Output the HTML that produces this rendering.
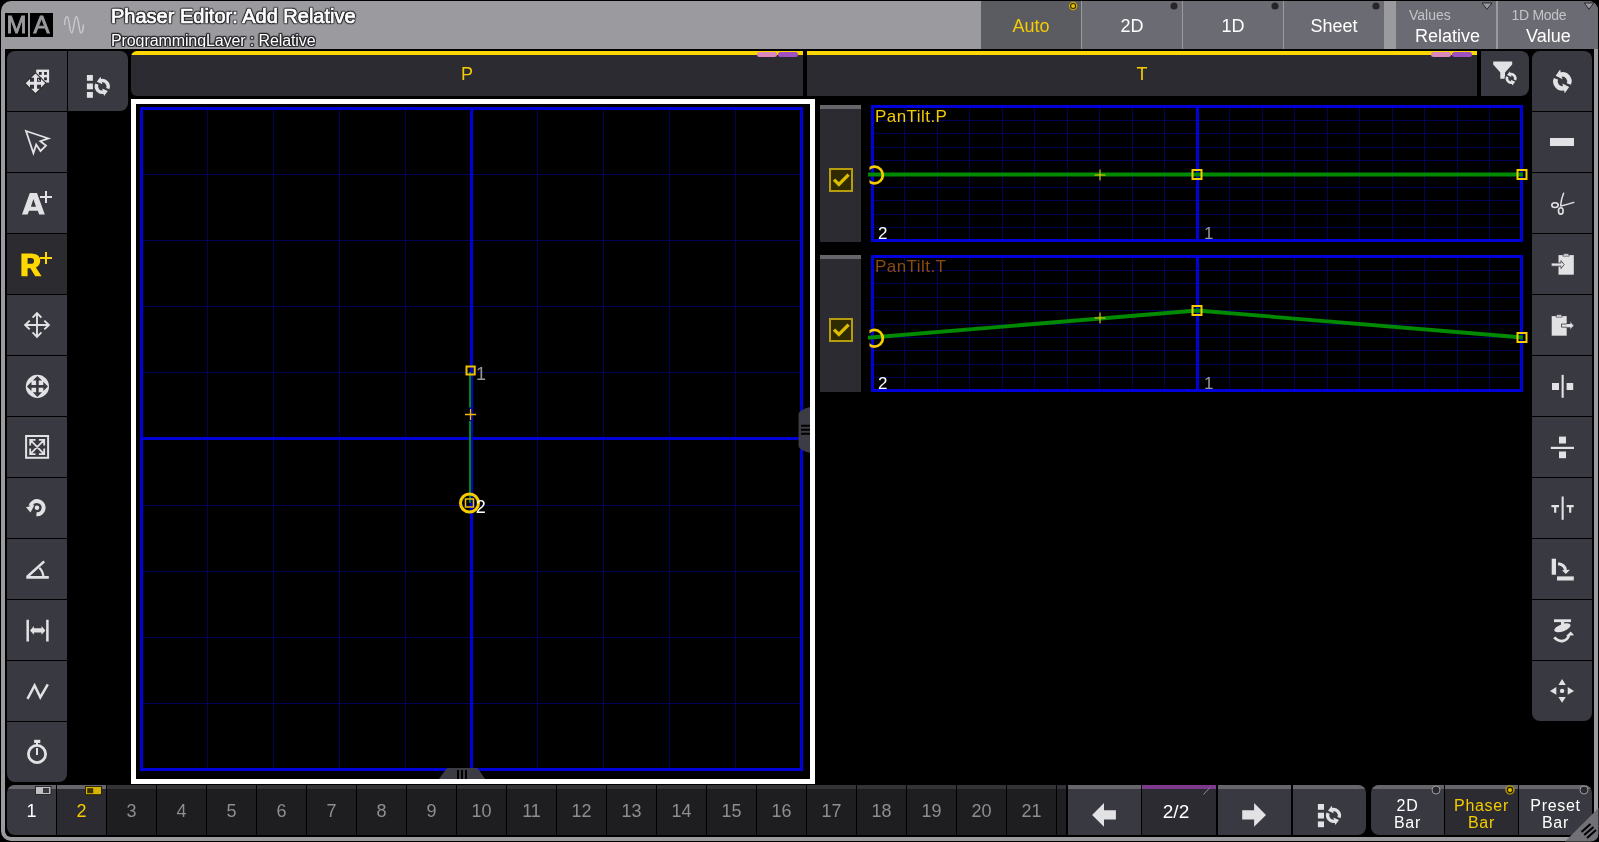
<!DOCTYPE html>
<html><head><meta charset="utf-8">
<style>
*{margin:0;padding:0;box-sizing:border-box}
html,body{width:1599px;height:842px;overflow:hidden;background:#000;font-family:"Liberation Sans",sans-serif}
.a{position:absolute}
.tb{top:1px;height:48px;background:#6b6b73;color:#fff;font-size:18px;text-align:center;line-height:50px}
.dot{position:absolute;width:9px;height:9px;border-radius:50%;background:#26262a;top:5px;right:4px}
.btn{position:absolute;background:#393941}
.hdr{top:51px;height:45px;background:#2c2b31;border-radius:6px;overflow:hidden;color:#f5cc00;font-size:18px;text-align:center;line-height:47px}
.hdr .ys{position:absolute;left:0;top:0;right:0;height:4px;background:#ffd700}
.bb{overflow:hidden;top:785px;height:50px;width:49px;background:#1f1f22;color:#8e8e92;font-size:18px;text-align:center;line-height:52px}
.bb .st{position:absolute;left:0;top:0;right:0;height:4px;background:#333337}
svg{position:absolute;overflow:visible}
.ic{position:absolute;left:0;top:0}
</style></head><body><div id="wrap" style="position:absolute;left:0;top:0;width:1599px;height:842px;will-change:transform">

<div class="a" style="left:1px;top:1px;width:1597px;height:840px;background:#9a9a9f;border-radius:10px"></div>
<div class="a" style="left:5px;top:49px;width:1589px;height:788px;background:#000;border-radius:0 0 6px 6px"></div>
<div class="a" style="left:5px;top:13px;width:23px;height:24px;background:#000"></div>
<div class="a" style="left:30px;top:13px;width:23px;height:24px;background:#000"></div>
<svg style="left:0;top:0" width="120" height="48"><text x="16.5" y="33.2" text-anchor="middle" font-family="Liberation Sans" font-size="24" fill="#9a9a9f" stroke="#9a9a9f" stroke-width="0.9">M</text><text x="41.5" y="33.2" text-anchor="middle" font-family="Liberation Sans" font-size="24" fill="#9a9a9f" stroke="#9a9a9f" stroke-width="0.9">A</text><path d="M64.6 25 C64.8 19 65.5 16.8 67.1 16.8 C69.5 16.8 69.5 32.9 71.6 32.9 C73.8 32.9 74 16.8 76.4 16.8 C78.8 16.8 79 32.9 80.9 32.9 C82.5 32.9 83.4 28 83.4 24.6" fill="none" stroke="#c8c8cc" stroke-width="1.5"/></svg>
<div class="a" style="left:111px;top:5px;color:#fff;font-size:20px;-webkit-text-stroke:0.7px #fff;letter-spacing:0px;white-space:nowrap;text-shadow:0 0 1px #2a2a2e,0 0 1.5px #2a2a2e,1px 0 1px #2a2a2e,-1px 0 1px #2a2a2e,0 1px 1px #2a2a2e,0 -1px 1px #2a2a2e,1px 1px 1px #2a2a2e,-1px -1px 1px #2a2a2e,1px -1px 1px #2a2a2e,-1px 1px 1px #2a2a2e">Phaser Editor: Add Relative</div>
<div class="a" style="left:111px;top:32px;height:14.5px;overflow:hidden;color:#fff;font-size:16px;letter-spacing:-0.1px;white-space:nowrap;text-shadow:0 0 1px #2a2a2e,0 0 1.5px #2a2a2e,1px 0 1px #2a2a2e,-1px 0 1px #2a2a2e,0 1px 1px #2a2a2e,0 -1px 1px #2a2a2e,1px 1px 1px #2a2a2e,-1px -1px 1px #2a2a2e,1px -1px 1px #2a2a2e,-1px 1px 1px #2a2a2e">ProgrammingLayer : Relative</div>
<div class="a tb" style="left:981px;width:100px;background:#5b5b62;color:#f5cc00">Auto</div>
<div class="a tb" style="left:1082px;width:100px">2D</div>
<div class="a tb" style="left:1183px;width:100px">1D</div>
<div class="a tb" style="left:1284px;width:100px">Sheet</div>
<div class="a tb" style="left:1396px;width:100px;line-height:normal"><div class="a" style="left:13px;top:6px;font-size:14px;color:#c4c4c8">Values</div><div class="a" style="left:19px;top:25px;font-size:18px">Relative</div></div>
<div class="a tb" style="left:1498px;width:100px;border-top-right-radius:9px;line-height:normal"><div class="a" style="left:13.5px;top:6px;font-size:14px;letter-spacing:-0.3px;color:#c4c4c8">1D Mode</div><div class="a" style="left:28px;top:25px;font-size:18px">Value</div></div>
<svg style="left:0;top:0" width="1599" height="20"><circle cx="1073.1" cy="6" r="3.6" fill="#2a2400" stroke="#c8a800" stroke-width="1.2"/><circle cx="1073.1" cy="6" r="2" fill="#e6c000"/></svg>
<svg style="left:0;top:0" width="1599" height="20"><circle cx="1174" cy="6" r="3.6" fill="#26262a"/></svg>
<svg style="left:0;top:0" width="1599" height="20"><circle cx="1275" cy="6" r="3.6" fill="#26262a"/></svg>
<svg style="left:0;top:0" width="1599" height="20"><circle cx="1376" cy="6" r="3.6" fill="#26262a"/></svg>
<svg style="left:0;top:0" width="1599" height="20"><path d="M1482 3 H1492 L1487 9.3 Z M1584.3 3 H1593.6 L1589 9.3 Z" fill="#9a9a9f" stroke="#2a2a2e" stroke-width="1"/></svg>
<div class="btn" style="left:7px;top:51.0px;width:60px;height:60px;background:#393941;border-top-left-radius:8px;"></div>
<div class="btn" style="left:7px;top:112.0px;width:60px;height:60px;background:#393941;"></div>
<div class="btn" style="left:7px;top:173.0px;width:60px;height:60px;background:#393941;"></div>
<div class="btn" style="left:7px;top:234.0px;width:60px;height:60px;background:#2b2b30;"></div>
<div class="btn" style="left:7px;top:295.0px;width:60px;height:60px;background:#393941;"></div>
<div class="btn" style="left:7px;top:356.0px;width:60px;height:60px;background:#393941;"></div>
<div class="btn" style="left:7px;top:417.0px;width:60px;height:60px;background:#393941;"></div>
<div class="btn" style="left:7px;top:478.0px;width:60px;height:60px;background:#393941;"></div>
<div class="btn" style="left:7px;top:539.0px;width:60px;height:60px;background:#393941;"></div>
<div class="btn" style="left:7px;top:600.0px;width:60px;height:60px;background:#393941;"></div>
<div class="btn" style="left:7px;top:661.0px;width:60px;height:60px;background:#393941;"></div>
<div class="btn" style="left:7px;top:722.0px;width:60px;height:60px;background:#393941;border-bottom-left-radius:8px;border-bottom-right-radius:8px;"></div>
<div class="btn" style="left:68px;top:51px;width:60px;height:60px;border-top-right-radius:8px;border-bottom-right-radius:8px"></div>
<div class="btn" style="left:1532px;top:51.0px;width:60px;height:60px;border-top-left-radius:8px;border-top-right-radius:8px;"></div>
<div class="btn" style="left:1532px;top:112.0px;width:60px;height:60px;"></div>
<div class="btn" style="left:1532px;top:173.0px;width:60px;height:60px;"></div>
<div class="btn" style="left:1532px;top:234.0px;width:60px;height:60px;"></div>
<div class="btn" style="left:1532px;top:295.0px;width:60px;height:60px;"></div>
<div class="btn" style="left:1532px;top:356.0px;width:60px;height:60px;"></div>
<div class="btn" style="left:1532px;top:417.0px;width:60px;height:60px;"></div>
<div class="btn" style="left:1532px;top:478.0px;width:60px;height:60px;"></div>
<div class="btn" style="left:1532px;top:539.0px;width:60px;height:60px;"></div>
<div class="btn" style="left:1532px;top:600.0px;width:60px;height:60px;"></div>
<div class="btn" style="left:1532px;top:661.0px;width:60px;height:60px;border-bottom-left-radius:8px;border-bottom-right-radius:8px;"></div>
<div class="btn" style="left:1481px;top:51px;width:48px;height:45px;border-top-right-radius:8px;border-bottom-right-radius:8px"></div>
<div class="a hdr" style="left:131px;width:672px;border-radius:6px 0 0 6px"><div class="ys"></div>P<div class="a" style="left:626px;top:1px;width:20px;height:5px;border-radius:3px;background:#dd88bb"></div><div class="a" style="left:647px;top:1px;width:20px;height:5px;border-radius:3px;background:#a050c0"></div></div>
<div class="a hdr" style="left:807px;width:670px;border-radius:0"><div class="ys"></div>T<div class="a" style="left:624px;top:1px;width:20px;height:5px;border-radius:3px;background:#dd88bb"></div><div class="a" style="left:645px;top:1px;width:20px;height:5px;border-radius:3px;background:#a050c0"></div></div>
<div class="a" style="left:131px;top:99px;width:684px;height:685px;border:5px solid #fff"></div>
<svg style="left:0;top:0" width="1599" height="842">
<path d="M207.5 107 V771 M273.5 107 V771 M339.5 107 V771 M405.5 107 V771 M537.5 107 V771 M603.5 107 V771 M669.5 107 V771 M735.5 107 V771 M140 174.5 H803 M140 240.5 H803 M140 306.5 H803 M140 372.5 H803 M140 505.5 H803 M140 571.5 H803 M140 637.5 H803 M140 703.5 H803" stroke="#020258" stroke-width="1" shape-rendering="crispEdges"/>
<path d="M471.5 107 V771 M140 438.5 H803" stroke="#0000d8" stroke-width="3" shape-rendering="crispEdges"/>
<rect x="141.5" y="108.5" width="660" height="661" fill="none" stroke="#0000d8" stroke-width="3" shape-rendering="crispEdges"/>
<path d="M470 372 V407.5 M470 421 V503" stroke="#008a00" stroke-width="2"/>
<rect x="466.5" y="366.5" width="8.2" height="8" fill="none" stroke="#f0c000" stroke-width="2"/>
<path d="M465 414.5 H476 M470.5 409 V420" stroke="#f0c000" stroke-width="1.3"/>
<circle cx="469.5" cy="503" r="9" fill="none" stroke="#f5cc00" stroke-width="3"/>
<rect x="465.5" y="499" width="8" height="8" fill="none" stroke="#f0c000" stroke-width="1.5"/>
<text x="476" y="380.4" font-size="18" fill="#999" font-family="Liberation Sans">1</text>
<text x="475.8" y="512.9" font-size="18" fill="#fff" font-family="Liberation Sans">2</text>
<path d="M904.5 105 V242 M937.5 105 V242 M969.5 105 V242 M1002.5 105 V242 M1034.5 105 V242 M1067.5 105 V242 M1099.5 105 V242 M1132.5 105 V242 M1164.5 105 V242 M1229.5 105 V242 M1262.5 105 V242 M1294.5 105 V242 M1327.5 105 V242 M1359.5 105 V242 M1392.5 105 V242 M1424.5 105 V242 M1457.5 105 V242 M1489.5 105 V242 M871 120.5 H1523 M871 133.5 H1523 M871 147.5 H1523 M871 160.5 H1523 M871 174.5 H1523 M871 187.5 H1523 M871 200.5 H1523 M871 214.5 H1523 M871 227.5 H1523" stroke="#020258" stroke-width="1" shape-rendering="crispEdges"/>
<path d="M1197.5 105 V242" stroke="#0000d8" stroke-width="3" shape-rendering="crispEdges"/>
<rect x="872.5" y="106.5" width="649" height="134" fill="none" stroke="#0000d8" stroke-width="3" shape-rendering="crispEdges"/>
<path d="M868 174.5 L1197 174.5 L1523 174.5" fill="none" stroke="#008a00" stroke-width="3.8"/>
<clipPath id="cl0"><rect x="869.5" y="105" width="40" height="137"/></clipPath>
<circle cx="874.5" cy="175.0" r="8.3" fill="none" stroke="#f5cc00" stroke-width="2.8" clip-path="url(#cl0)"/>
<rect x="1192.5" y="170.0" width="9" height="9" fill="none" stroke="#f5cc00" stroke-width="2"/>
<rect x="1517.5" y="170.0" width="9" height="9" fill="none" stroke="#f5cc00" stroke-width="2"/>
<path d="M1094.5 175 H1105.5 M1100 169.5 V180.5" stroke="#f5cc00" stroke-width="1.1"/>
<path d="M904.5 255 V392 M937.5 255 V392 M969.5 255 V392 M1002.5 255 V392 M1034.5 255 V392 M1067.5 255 V392 M1099.5 255 V392 M1132.5 255 V392 M1164.5 255 V392 M1229.5 255 V392 M1262.5 255 V392 M1294.5 255 V392 M1327.5 255 V392 M1359.5 255 V392 M1392.5 255 V392 M1424.5 255 V392 M1457.5 255 V392 M1489.5 255 V392 M871 270.5 H1523 M871 283.5 H1523 M871 297.5 H1523 M871 310.5 H1523 M871 324.5 H1523 M871 337.5 H1523 M871 350.5 H1523 M871 364.5 H1523 M871 377.5 H1523" stroke="#020258" stroke-width="1" shape-rendering="crispEdges"/>
<path d="M1197.5 255 V392" stroke="#0000d8" stroke-width="3" shape-rendering="crispEdges"/>
<rect x="872.5" y="256.5" width="649" height="134" fill="none" stroke="#0000d8" stroke-width="3" shape-rendering="crispEdges"/>
<path d="M868 337.7484662576687 L1197 310.5 L1523 337.5" fill="none" stroke="#008a00" stroke-width="3.8"/>
<clipPath id="cl150"><rect x="869.5" y="255" width="40" height="137"/></clipPath>
<circle cx="874.5" cy="338.2484662576687" r="8.3" fill="none" stroke="#f5cc00" stroke-width="2.8" clip-path="url(#cl150)"/>
<rect x="1192.5" y="306.0" width="9" height="9" fill="none" stroke="#f5cc00" stroke-width="2"/>
<rect x="1517.5" y="333.0" width="9" height="9" fill="none" stroke="#f5cc00" stroke-width="2"/>
<path d="M1094.5 318 H1105.5 M1100 312.5 V323.5" stroke="#f5cc00" stroke-width="1.1"/>
</svg>
<div class="a" style="left:820px;top:105px;width:41px;height:137px;background:#2c2b31"><div class="a" style="left:0;top:0;width:41px;height:4px;background:#66666a"></div><div class="a" style="left:9px;top:63px;width:24px;height:24px;border:2px solid #b89c10;background:#302a00"></div></div>
<svg style="left:0;top:0" width="1599" height="842"><path d="M834 179.6 L838.9 184.4 L848.6 174.6" transform="translate(0 0)" fill="none" stroke="#dcbc00" stroke-width="3.3"/></svg>
<div class="a" style="left:875px;top:107px;font-size:17px;letter-spacing:0.45px;color:#f5cc00">PanTilt.P</div>
<div class="a" style="left:878px;top:224px;font-size:17px;color:#fff">2</div>
<div class="a" style="left:1204px;top:224px;font-size:17px;color:#999">1</div>
<div class="a" style="left:820px;top:255px;width:41px;height:137px;background:#2c2b31"><div class="a" style="left:0;top:0;width:41px;height:4px;background:#66666a"></div><div class="a" style="left:9px;top:63px;width:24px;height:24px;border:2px solid #b89c10;background:#302a00"></div></div>
<svg style="left:0;top:0" width="1599" height="842"><path d="M834 179.6 L838.9 184.4 L848.6 174.6" transform="translate(0 150)" fill="none" stroke="#dcbc00" stroke-width="3.3"/></svg>
<div class="a" style="left:875px;top:257px;font-size:17px;letter-spacing:0.45px;color:#8a4a12">PanTilt.T</div>
<div class="a" style="left:878px;top:374px;font-size:17px;color:#fff">2</div>
<div class="a" style="left:1204px;top:374px;font-size:17px;color:#999">1</div>
<div class="a bb" style="left:7px;background:#393941;color:#fff;border-top-left-radius:8px;border-bottom-left-radius:8px;"><div class="st" style="background:#66666c"></div>1</div>
<div class="a bb" style="left:57px;background:#2b2b31;color:#f5cc00;"><div class="st" style="background:#66666c"></div>2</div>
<div class="a bb" style="left:107px;background:#1e1e21;color:#8e8e92;"><div class="st" style="background:#333337"></div>3</div>
<div class="a bb" style="left:157px;background:#1e1e21;color:#8e8e92;"><div class="st" style="background:#333337"></div>4</div>
<div class="a bb" style="left:207px;background:#1e1e21;color:#8e8e92;"><div class="st" style="background:#333337"></div>5</div>
<div class="a bb" style="left:257px;background:#1e1e21;color:#8e8e92;"><div class="st" style="background:#333337"></div>6</div>
<div class="a bb" style="left:307px;background:#1e1e21;color:#8e8e92;"><div class="st" style="background:#333337"></div>7</div>
<div class="a bb" style="left:357px;background:#1e1e21;color:#8e8e92;"><div class="st" style="background:#333337"></div>8</div>
<div class="a bb" style="left:407px;background:#1e1e21;color:#8e8e92;"><div class="st" style="background:#333337"></div>9</div>
<div class="a bb" style="left:457px;background:#1e1e21;color:#8e8e92;"><div class="st" style="background:#333337"></div>10</div>
<div class="a bb" style="left:507px;background:#1e1e21;color:#8e8e92;"><div class="st" style="background:#333337"></div>11</div>
<div class="a bb" style="left:557px;background:#1e1e21;color:#8e8e92;"><div class="st" style="background:#333337"></div>12</div>
<div class="a bb" style="left:607px;background:#1e1e21;color:#8e8e92;"><div class="st" style="background:#333337"></div>13</div>
<div class="a bb" style="left:657px;background:#1e1e21;color:#8e8e92;"><div class="st" style="background:#333337"></div>14</div>
<div class="a bb" style="left:707px;background:#1e1e21;color:#8e8e92;"><div class="st" style="background:#333337"></div>15</div>
<div class="a bb" style="left:757px;background:#1e1e21;color:#8e8e92;"><div class="st" style="background:#333337"></div>16</div>
<div class="a bb" style="left:807px;background:#1e1e21;color:#8e8e92;"><div class="st" style="background:#333337"></div>17</div>
<div class="a bb" style="left:857px;background:#1e1e21;color:#8e8e92;"><div class="st" style="background:#333337"></div>18</div>
<div class="a bb" style="left:907px;background:#1e1e21;color:#8e8e92;"><div class="st" style="background:#333337"></div>19</div>
<div class="a bb" style="left:957px;background:#1e1e21;color:#8e8e92;"><div class="st" style="background:#333337"></div>20</div>
<div class="a bb" style="left:1007px;background:#1e1e21;color:#8e8e92;"><div class="st" style="background:#333337"></div>21</div>
<div class="a bb" style="left:1057px;width:9px"><div class="st"></div></div>
<svg style="left:0;top:0" width="1599" height="842"><rect x="35.5" y="786.5" width="15.5" height="8" fill="#c0c0c4" stroke="#2a2a2e" stroke-width="1"/><rect x="43" y="788" width="6" height="5" fill="#3a3a40"/><rect x="85.5" y="786.5" width="16" height="8.2" fill="#d6b400" stroke="#2a2400" stroke-width="1"/><rect x="87.2" y="788.2" width="6" height="5" fill="#3a3000"/></svg>
<div class="a bb" style="left:1068px;width:73px;background:#393941;color:#fff;"><div class="st" style="background:#66666c"></div></div>
<div class="a bb" style="left:1142px;width:74px;background:#2b2b31;color:#fff;"><div class="st" style="background:#7c3a8c"></div><span style="position:relative;left:-3px;top:1px;font-size:19px">2/2</span></div>
<div class="a bb" style="left:1218px;width:73px;background:#393941;color:#fff;"><div class="st" style="background:#66666c"></div></div>
<div class="a bb" style="left:1293px;width:73px;background:#393941;color:#fff;border-top-right-radius:8px;border-bottom-right-radius:8px;"><div class="st" style="background:#66666c"></div></div>
<div class="a bb" style="left:1371px;width:73px;background:#393941;color:#fff;border-top-left-radius:8px;border-bottom-left-radius:8px;"><div class="st" style="background:#66666c"></div><div style="font-size:16px;line-height:17px;padding-top:12px;letter-spacing:0.7px">2D<br>Bar</div></div>
<div class="a bb" style="left:1445px;width:73px;background:#2b2b31;color:#fff;"><div class="st" style="background:#66666c"></div><div style="font-size:16px;line-height:17px;padding-top:12px;letter-spacing:0.7px;color:#f5cc00">Phaser<br>Bar</div></div>
<div class="a bb" style="left:1519px;width:73px;background:#393941;color:#fff;border-top-right-radius:8px;border-bottom-right-radius:8px;"><div class="st" style="background:#66666c"></div><div style="font-size:16px;line-height:17px;padding-top:12px;letter-spacing:0.7px">Preset<br>Bar</div></div>
<svg style="left:0;top:0" width="1599" height="842"><circle cx="1436" cy="790" r="4" fill="#2a2a2e" stroke="#9a9a9f" stroke-width="1"/><circle cx="1510" cy="790" r="4" fill="#2a2400" stroke="#c8a800" stroke-width="1.2"/><circle cx="1510" cy="790" r="2" fill="#e6c000"/><circle cx="1584" cy="790" r="4" fill="#2a2a2e" stroke="#9a9a9f" stroke-width="1"/><path d="M1203.5 794.5 L1210 787.5" stroke="#8a8a90" stroke-width="1"/><path d="M1598.5 808 V833 Q1598.5 841.5 1590 841.5 H1565 Z" fill="#707076"/><path d="M1581.5 832 L1590.5 824 M1584.2 835 L1593.5 827 M1587 838 L1596 830" stroke="#000" stroke-width="2"/></svg>
<svg style="left:0;top:0" width="1599" height="842"><path d="M798.5 414 Q799 410 810 407 V453 Q799 450 798.5 446 Z" fill="#3c3c44"/><path d="M801 425.8 H810 M801 429.8 H810 M801 433.8 H810" stroke="#000" stroke-width="2"/><path d="M439 779 L446.5 768.5 Q447.5 768 450 768 H475 Q477.5 768 478.5 769 L485 779 Z" fill="#3c3c44"/><path d="M458 770 V779 M462 770 V779 M466 770 V779" stroke="#000" stroke-width="2"/></svg>
<svg style="left:0;top:0" width="1599" height="842"><rect x="36.2" y="69.6" width="12.9" height="13" fill="#e2e2e4"/>
<rect x="38.9" y="72" width="2.8" height="2.8" fill="#2a2a30"/>
<rect x="38.9" y="77.4" width="2.8" height="2.8" fill="#2a2a30"/>
<rect x="44.1" y="72" width="2.8" height="2.8" fill="#2a2a30"/>
<rect x="44.1" y="77.4" width="2.8" height="2.8" fill="#2a2a30"/>
<g fill="none" stroke="#2e2e34" stroke-width="2.2" stroke-linejoin="round"><path d="M25.7 83.3 L30 79 L30 81.75 L33.95 81.75 L33.95 77.8 L31.2 77.8 L35.5 73.5 L39.8 77.8 L37.05 77.8 L37.05 81.75 L41 81.75 L41 79 L45.3 83.3 L41 87.6 L41 84.85 L37.05 84.85 L37.05 88.8 L39.8 88.8 L35.5 93.1 L31.2 88.8 L33.95 88.8 L33.95 84.85 L30 84.85 L30 87.6 Z"/></g>
<g fill="#e2e2e4"><path d="M25.7 83.3 L30 79 L30 81.75 L33.95 81.75 L33.95 77.8 L31.2 77.8 L35.5 73.5 L39.8 77.8 L37.05 77.8 L37.05 81.75 L41 81.75 L41 79 L45.3 83.3 L41 87.6 L41 84.85 L37.05 84.85 L37.05 88.8 L39.8 88.8 L35.5 93.1 L31.2 88.8 L33.95 88.8 L33.95 84.85 L30 84.85 L30 87.6 Z"/></g>
<rect x="86.9" y="75" width="6" height="5.8" fill="#e2e2e4"/>
<rect x="86.9" y="83.5" width="6" height="5.8" fill="#e2e2e4"/>
<rect x="86.9" y="92" width="6" height="5.8" fill="#e2e2e4"/>
<path d="M100.87 80.68 A5.9 5.9 0 0 1 107.77 88.61" fill="none" stroke="#e2e2e4" stroke-width="3.4"/>
<path d="M100.51 76.75 L96.8 81.69 L102.4 84.31 Z" fill="#e2e2e4"/>
<path d="M103.73 92.12 A5.9 5.9 0 0 1 96.83 84.19" fill="none" stroke="#e2e2e4" stroke-width="3.4"/>
<path d="M104.09 96.05 L107.8 91.11 L102.2 88.49 Z" fill="#e2e2e4"/>
<path d="M26 131 L48.4 138.4 L40.3 141.2 L46 145.6 L40.5 151 L36.2 144.6 L33.4 153.1 Z" fill="none" stroke="#e2e2e4" stroke-width="1.8" stroke-linejoin="miter"/>
<path d="M22 214.6 L29.8 193 L37 193 L44.8 214.6 L39.2 214.6 L37.8 210.8 L29 210.8 L27.6 214.6 Z M33.4 199 L30.9 206.8 L36 206.8 Z" fill="#e2e2e4" fill-rule="evenodd"/>
<path d="M46 191 V203 M40 197 H52" stroke="#e2e2e4" stroke-width="2"/>
<path d="M21.4 276.3 V253.5 H31 Q40.2 253.5 40.2 260.8 Q40.2 265.6 35.9 267.4 L41.6 276.3 H35.2 L30.4 268.2 H27.6 V276.3 Z M27.6 258.1 V263.8 H30.8 Q34 263.8 34 260.95 Q34 258.1 30.8 258.1 Z" fill="#ffd800" fill-rule="evenodd"/>
<path d="M46 252 V264 M40 258 H52" stroke="#ffd800" stroke-width="2"/>
<path d="M25.1 325 H48.9 M37 313.1 V336.9 M29.700000000000003 320.6 L25.1 325 L29.700000000000003 329.4 M44.3 320.6 L48.9 325 L44.3 329.4 M32.6 317.70000000000005 L37 313.1 L41.4 317.70000000000005 M32.6 332.29999999999995 L37 336.9 L41.4 332.29999999999995" fill="none" stroke="#e2e2e4" stroke-width="1.9"/>
<circle cx="37.4" cy="386.4" r="11.6" fill="#e2e2e4"/>
<g fill="#393941"><path d="M26.9 386.4 L31.5 381.8 L31.5 385.1 L36.1 385.1 L36.1 380.5 L32.8 380.5 L37.4 375.9 L42 380.5 L38.7 380.5 L38.7 385.1 L43.3 385.1 L43.3 381.8 L47.9 386.4 L43.3 391 L43.3 387.7 L38.7 387.7 L38.7 392.3 L42 392.3 L37.4 396.9 L32.8 392.3 L36.1 392.3 L36.1 387.7 L31.5 387.7 L31.5 391 Z"/></g>
<rect x="26.1" y="436" width="22" height="21.8" fill="none" stroke="#e2e2e4" stroke-width="2"/>
<path d="M30.5 440.2 L43.9 453.8 M43.9 440.2 L30.5 453.8 M30.2 445.5 V439.9 H35.5 M38.9 439.9 H44.2 V445.5 M44.2 448.5 V454.1 H38.9 M35.5 454.1 H30.2 V448.5" fill="none" stroke="#e2e2e4" stroke-width="1.8"/>
<path d="M36.42 514.27 A6.6 6.6 0 1 0 30.62 505.99" fill="none" stroke="#e2e2e4" stroke-width="4"/>
<path d="M26 507.3 L34.5 505 L30.5 512.5 Z" fill="#e2e2e4"/>
<circle cx="37" cy="507.7" r="2.3" fill="#e2e2e4"/>
<path d="M26.3 577.4 H48.8 M27 577 L44.2 561.4" fill="none" stroke="#e2e2e4" stroke-width="2.6"/>
<path d="M39.3 567.8 Q43 571 43.4 577" fill="none" stroke="#e2e2e4" stroke-width="2.2"/>
<path d="M27.7 619.8 V641.6 M47.4 619.8 V641.6" fill="none" stroke="#e2e2e4" stroke-width="2.5"/>
<path d="M30 630.4 L33.9 626.1 V628.3 H41.5 V626.1 L45.4 630.4 L41.5 634.7 V632.5 H33.9 V634.7 Z" fill="#e2e2e4"/>
<path d="M27.5 698.8 L34.6 685.5 L40.3 697.4 L47.8 684.4" fill="none" stroke="#e2e2e4" stroke-width="2.5" stroke-linejoin="miter"/>
<circle cx="37" cy="754" r="8.6" fill="none" stroke="#e2e2e4" stroke-width="2.8"/>
<rect x="34.1" y="739.8" width="6.2" height="3.2" fill="#e2e2e4"/><rect x="36" y="742.5" width="2" height="3" fill="#e2e2e4"/>
<rect x="36" y="748" width="2" height="7" fill="#e2e2e4"/>
<path d="M1560.71 74.61 A7 7 0 0 1 1568.89 84.02" fill="none" stroke="#e2e2e4" stroke-width="4.5"/>
<path d="M1560.08 69.61 L1555.66 75.87 L1562.5 79.31 Z" fill="#e2e2e4"/>
<path d="M1564.09 88.19 A7 7 0 0 1 1555.91 78.78" fill="none" stroke="#e2e2e4" stroke-width="4.5"/>
<path d="M1564.72 93.19 L1569.14 86.93 L1562.3 83.49 Z" fill="#e2e2e4"/>
<rect x="1550" y="138" width="24" height="8" fill="#e2e2e4"/>
<path d="M1560.6 205.5 Q1561.5 198 1563.6 193.2 M1561 206 Q1567 204.5 1573.8 202.4" fill="none" stroke="#e2e2e4" stroke-width="1.5" stroke-linecap="round"/>
<ellipse cx="1555" cy="205.1" rx="3.2" ry="2.4" fill="none" stroke="#e2e2e4" stroke-width="1.6"/>
<ellipse cx="1560.8" cy="210.9" rx="2.3" ry="3.2" fill="none" stroke="#e2e2e4" stroke-width="1.6"/>
<rect x="1558.5" y="255.1" width="15.3" height="19.6" fill="#e2e2e4"/>
<path d="M1562.9 256.2 H1569.2 L1568.5 253.8 H1563.6 Z" fill="#e2e2e4" stroke="#393941" stroke-width="0.6"/>
<path d="M1551.2 263 H1561 V260.6 L1564.2 264.6 L1561 268.6 V266.2 H1551.2 Z" fill="#e2e2e4" stroke="#393941" stroke-width="0.8"/>
<rect x="1551.7" y="316.1" width="15" height="19.6" fill="#e2e2e4"/>
<path d="M1556 317.2 H1562.2 L1561.5 314.8 H1556.7 Z" fill="#e2e2e4" stroke="#393941" stroke-width="0.6"/>
<path d="M1561.5 324 H1570 V321.3 L1573.9 325.6 L1570 329.9 V327.2 H1561.5 Z" fill="#e2e2e4" stroke="#393941" stroke-width="0.8"/>
<rect x="1566.7" y="324" width="3.5" height="3.2" fill="#e2e2e4"/>
<rect x="1561.6" y="374.9" width="2.1" height="22.9" fill="#e2e2e4"/><rect x="1552" y="383" width="7" height="7" fill="#e2e2e4"/><rect x="1566.6" y="383" width="6.6" height="7" fill="#e2e2e4"/>
<rect x="1550.8" y="446.8" width="23.2" height="2.2" fill="#e2e2e4"/><rect x="1559" y="436.6" width="7" height="6.9" fill="#e2e2e4"/><rect x="1559" y="451.5" width="7" height="6.7" fill="#e2e2e4"/>
<rect x="1561.6" y="496.5" width="2.1" height="23.3" fill="#e2e2e4"/>
<path d="M1551.4 506.2 H1559 M1555.2 506 V512.8 M1566.6 506.2 H1573.7 M1570.2 506 V512.8" fill="none" stroke="#e2e2e4" stroke-width="2.2"/>
<rect x="1551.7" y="558.7" width="4.3" height="16" fill="#e2e2e4"/><rect x="1557" y="576.4" width="16.8" height="4.1" fill="#e2e2e4"/>
<path d="M1558 563.8 Q1564.5 564.5 1565.5 570" fill="none" stroke="#e2e2e4" stroke-width="3"/>
<path d="M1562 570.3 L1570 569.8 L1565.8 574 Z" fill="#e2e2e4"/>
<rect x="1554" y="619.3" width="17" height="2.8" fill="#e2e2e4"/><rect x="1561" y="622" width="3.2" height="3" fill="#e2e2e4"/>
<ellipse cx="1562.4" cy="627.8" rx="8.6" ry="3.6" transform="rotate(-20 1562.4 627.8)" fill="#e2e2e4"/>
<path d="M1554.2 637.4 Q1558 641.5 1562.5 641 Q1567.5 640.5 1569 635" fill="none" stroke="#e2e2e4" stroke-width="2.8"/>
<path d="M1566 636 L1570.8 631.5 L1574 635.3 Z" fill="#e2e2e4"/>
<path d="M1562.1 679 L1565.8 685 H1558.4 Z M1562.1 702.8 L1565.8 696.9 H1558.4 Z M1550 690.9 L1556.3 687.1 V694.7 Z M1574 690.9 L1567.7 687.1 V694.7 Z" fill="#e2e2e4"/>
<circle cx="1562.1" cy="690.9" r="2.2" fill="#e2e2e4"/>
<path d="M1493.2 61.5 H1512.2 V64.4 L1505 72.5 V78.7 H1500.3 V72.5 L1493.2 64.4 Z" fill="#e2e2e4"/>
<circle cx="1511.1" cy="78.4" r="6.6" fill="#393941"/>
<path d="M1510.08 74.32 A4.2 4.2 0 0 1 1514.99 79.97" fill="none" stroke="#e2e2e4" stroke-width="2.6"/>
<path d="M1509.96 71.37 L1506.98 75.1 L1511.37 76.99 Z" fill="#e2e2e4"/>
<path d="M1512.12 82.48 A4.2 4.2 0 0 1 1507.21 76.83" fill="none" stroke="#e2e2e4" stroke-width="2.6"/>
<path d="M1512.24 85.43 L1515.22 81.7 L1510.83 79.81 Z" fill="#e2e2e4"/>
<path d="M1092.1 815 L1104 803.1 V810.2 H1115.9 V819.6 H1104 V826.8 Z" fill="#e2e2e4"/>
<path d="M1266 815 L1254.1 803.1 V810.2 H1242.2 V819.6 H1254.1 V826.8 Z" fill="#e2e2e4"/>
<rect x="1317.9" y="804" width="6.1" height="5.8" fill="#e2e2e4"/>
<rect x="1317.9" y="812.7" width="6.1" height="5.8" fill="#e2e2e4"/>
<rect x="1317.9" y="821.4" width="6.1" height="5.8" fill="#e2e2e4"/>
<path d="M1332.07 809.68 A5.9 5.9 0 0 1 1338.97 817.61" fill="none" stroke="#e2e2e4" stroke-width="3.3"/>
<path d="M1331.71 805.75 L1328 810.69 L1333.6 813.31 Z" fill="#e2e2e4"/>
<path d="M1334.93 821.12 A5.9 5.9 0 0 1 1328.03 813.19" fill="none" stroke="#e2e2e4" stroke-width="3.3"/>
<path d="M1335.29 825.05 L1339 820.11 L1333.4 817.49 Z" fill="#e2e2e4"/></svg>
</div></body></html>
